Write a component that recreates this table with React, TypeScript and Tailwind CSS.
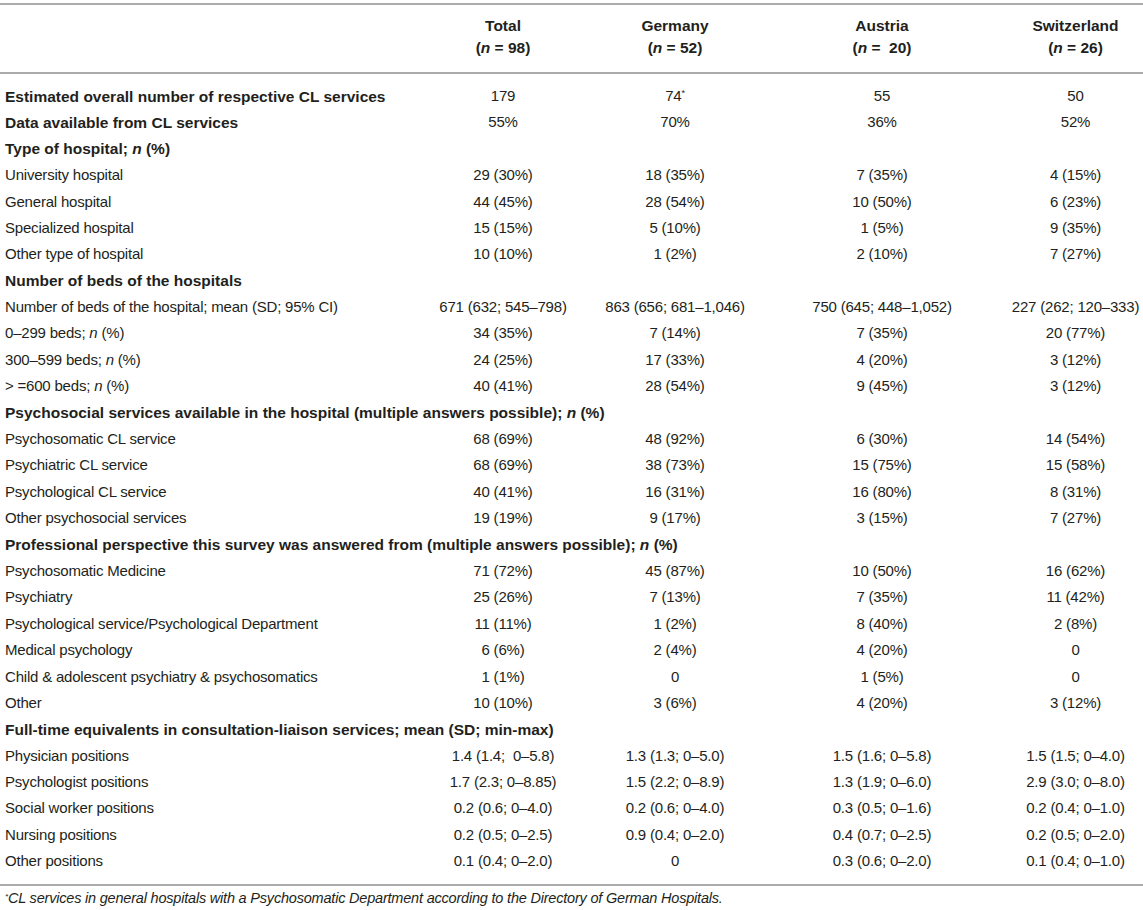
import React from "react"

type Row =
  | { kind: "head"; label: React.ReactNode }
  | { kind: "data"; label: React.ReactNode; bold?: boolean; values: React.ReactNode[] }

const n = <i>n</i>

const rows: Row[] = [
  { kind: "data", bold: true, label: "Estimated overall number of respective CL services", values: ["179", <>74<sup className="text-[9px]">*</sup></>, "55", "50"] },
  { kind: "data", bold: true, label: "Data available from CL services", values: ["55%", "70%", "36%", "52%"] },
  { kind: "head", label: <>Type of hospital; {n} (%)</> },
  { kind: "data", label: "University hospital", values: ["29 (30%)", "18 (35%)", "7 (35%)", "4 (15%)"] },
  { kind: "data", label: "General hospital", values: ["44 (45%)", "28 (54%)", "10 (50%)", "6 (23%)"] },
  { kind: "data", label: "Specialized hospital", values: ["15 (15%)", "5 (10%)", "1 (5%)", "9 (35%)"] },
  { kind: "data", label: "Other type of hospital", values: ["10 (10%)", "1 (2%)", "2 (10%)", "7 (27%)"] },
  { kind: "head", label: "Number of beds of the hospitals" },
  { kind: "data", label: "Number of beds of the hospital; mean (SD; 95% CI)", values: ["671 (632; 545–798)", "863 (656; 681–1,046)", "750 (645; 448–1,052)", "227 (262; 120–333)"] },
  { kind: "data", label: <>0–299 beds; {n} (%)</>, values: ["34 (35%)", "7 (14%)", "7 (35%)", "20 (77%)"] },
  { kind: "data", label: <>300–599 beds; {n} (%)</>, values: ["24 (25%)", "17 (33%)", "4 (20%)", "3 (12%)"] },
  { kind: "data", label: <>&gt; =600 beds; {n} (%)</>, values: ["40 (41%)", "28 (54%)", "9 (45%)", "3 (12%)"] },
  { kind: "head", label: <>Psychosocial services available in the hospital (multiple answers possible); {n} (%)</> },
  { kind: "data", label: "Psychosomatic CL service", values: ["68 (69%)", "48 (92%)", "6 (30%)", "14 (54%)"] },
  { kind: "data", label: "Psychiatric CL service", values: ["68 (69%)", "38 (73%)", "15 (75%)", "15 (58%)"] },
  { kind: "data", label: "Psychological CL service", values: ["40 (41%)", "16 (31%)", "16 (80%)", "8 (31%)"] },
  { kind: "data", label: "Other psychosocial services", values: ["19 (19%)", "9 (17%)", "3 (15%)", "7 (27%)"] },
  { kind: "head", label: <>Professional perspective this survey was answered from (multiple answers possible); {n} (%)</> },
  { kind: "data", label: "Psychosomatic Medicine", values: ["71 (72%)", "45 (87%)", "10 (50%)", "16 (62%)"] },
  { kind: "data", label: "Psychiatry", values: ["25 (26%)", "7 (13%)", "7 (35%)", "11 (42%)"] },
  { kind: "data", label: "Psychological service/Psychological Department", values: ["11 (11%)", "1 (2%)", "8 (40%)", "2 (8%)"] },
  { kind: "data", label: "Medical psychology", values: ["6 (6%)", "2 (4%)", "4 (20%)", "0"] },
  { kind: "data", label: "Child & adolescent psychiatry & psychosomatics", values: ["1 (1%)", "0", "1 (5%)", "0"] },
  { kind: "data", label: "Other", values: ["10 (10%)", "3 (6%)", "4 (20%)", "3 (12%)"] },
  { kind: "head", label: "Full-time equivalents in consultation-liaison services; mean (SD; min-max)" },
  { kind: "data", label: "Physician positions", values: ["1.4 (1.4;  0–5.8)", "1.3 (1.3; 0–5.0)", "1.5 (1.6; 0–5.8)", "1.5 (1.5; 0–4.0)"] },
  { kind: "data", label: "Psychologist positions", values: ["1.7 (2.3; 0–8.85)", "1.5 (2.2; 0–8.9)", "1.3 (1.9; 0–6.0)", "2.9 (3.0; 0–8.0)"] },
  { kind: "data", label: "Social worker positions", values: ["0.2 (0.6; 0–4.0)", "0.2 (0.6; 0–4.0)", "0.3 (0.5; 0–1.6)", "0.2 (0.4; 0–1.0)"] },
  { kind: "data", label: "Nursing positions", values: ["0.2 (0.5; 0–2.5)", "0.9 (0.4; 0–2.0)", "0.4 (0.7; 0–2.5)", "0.2 (0.5; 0–2.0)"] },
  { kind: "data", label: "Other positions", values: ["0.1 (0.4; 0–2.0)", "0", "0.3 (0.6; 0–2.0)", "0.1 (0.4; 0–1.0)"] },
]

const columns = [
  { name: "Total", count: "98" },
  { name: "Germany", count: "52" },
  { name: "Austria", count: " 20" },
  { name: "Switzerland", count: "26" },
]

const grid = "grid grid-cols-[412px_182px_162px_252px_135px]"

export default function App() {
  return (
    <div className="w-[1143px] h-[910px] overflow-hidden bg-white pt-[3px] text-[15px] text-[#231f20] font-['Liberation_Sans',Arial,sans-serif]">
      {/* column heads */}
      <div className={`${grid} border-t-2 border-b-2 border-[#ababab] pt-[10px] pb-[13px] text-[15.5px] font-bold`}>
        <div />
        {columns.map((c) => (
          <div key={c.name} className="text-center leading-[22px]">
            <div>{c.name}</div>
            <div className="whitespace-pre">
              (<i>n</i> = {c.count})
            </div>
          </div>
        ))}
      </div>

      <div className="pt-[9px] pb-[9px] border-b-2 border-[#ababab]">
        {rows.map((row, i) =>
          row.kind === "head" ? (
            <div key={i} className="h-[26.4px] flex items-center pl-[5px] text-[15.5px] font-bold">
              <span>{row.label}</span>
            </div>
          ) : (
            <div key={i} className={`${grid} h-[26.4px] items-center`}>
              <div className={`pl-[5px] ${row.bold ? "text-[15.5px] font-bold" : "tracking-[-0.2px]"}`}>{row.label}</div>
              {row.values.map((v, j) => (
                <div key={j} className="text-center whitespace-pre tracking-[-0.2px]">
                  {v}
                </div>
              ))}
            </div>
          )
        )}
      </div>

      <p className="pt-[4px] pl-[5px] text-[14.5px] italic leading-[17px] tracking-[-0.2px]">
        <sup className="text-[8px]">*</sup>CL services in general hospitals with a Psychosomatic Department according to the Directory of German Hospitals.
      </p>
    </div>
  )
}
